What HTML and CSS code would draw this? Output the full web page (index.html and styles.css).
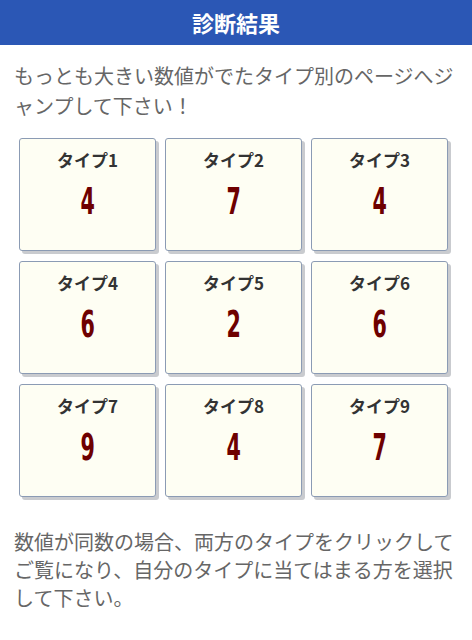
FILE: index.html
```html
<!DOCTYPE html>
<html lang="ja">
<head>
<meta charset="UTF-8">
<meta name="viewport" content="width=device-width, initial-scale=1.0">
<title>診断結果</title>
<link rel="stylesheet" href="styles.css">
</head>
<body>
    <div class="header">診断結果</div>

    <p class="note">もっとも大きい数値がでたタイプ別のページへジャンプして下さい！</p>

    <!-- タイプ別の結果 -->
    <div class="result-grid">
        <a class="type-box" href="#type1"><span class="type-name">タイプ1</span><span class="type-num">4</span></a>
        <a class="type-box" href="#type2"><span class="type-name">タイプ2</span><span class="type-num">7</span></a>
        <a class="type-box" href="#type3"><span class="type-name">タイプ3</span><span class="type-num">4</span></a>
        <a class="type-box" href="#type4"><span class="type-name">タイプ4</span><span class="type-num">6</span></a>
        <a class="type-box" href="#type5"><span class="type-name">タイプ5</span><span class="type-num">2</span></a>
        <a class="type-box" href="#type6"><span class="type-name">タイプ6</span><span class="type-num">6</span></a>
        <a class="type-box" href="#type7"><span class="type-name">タイプ7</span><span class="type-num">9</span></a>
        <a class="type-box" href="#type8"><span class="type-name">タイプ8</span><span class="type-num">4</span></a>
        <a class="type-box" href="#type9"><span class="type-name">タイプ9</span><span class="type-num">7</span></a>
    </div>

    <p class="note note-bottom">数値が同数の場合、両方のタイプをクリックしてご覧になり、自分のタイプに当てはまる方を選択して下さい。</p>
</body>
</html>
```

FILE: styles.css
```css
body{
    margin:0;
    background:#fff;
    font-family:"Noto Sans CJK JP", "Noto Sans", sans-serif;
}

.header{
    height:45px;
    line-height:45px;
    background:#2b57b5;
    color:#fff;
    font-size:22px;
    font-weight:bold;
    text-align:center;
}

.note{
    margin:16px 14px 0;
    color:#666;
    font-size:20px;
    line-height:30px;
}

.result-grid{
    display:grid;
    grid-template-columns:repeat(3, 137px);
    gap:10px 9px;
    margin:17px 0 0 19px;
}

.type-box{
    height:113px;
    box-sizing:border-box;
    border:1px solid #8b9bb4;
    border-radius:3px;
    background:#fefef3;
    box-shadow:3px 3px 0 #c9cbcf;
    display:flex;
    flex-direction:column;
    align-items:center;
    text-decoration:none;
}
.type-name{
    margin-top:10px;
    color:#333;
    font-size:17px;
    font-weight:bold;
    line-height:22px;
}
.type-num{
    display:inline-block;
    margin-top:9px;
    color:#6e0000;
    font-family:"DejaVu Sans Condensed", "DejaVu Sans", sans-serif;
    font-size:37px;
    font-weight:bold;
    line-height:44px;
    transform:scaleX(0.62);
}

/* 下の注意書きは行間が少し詰まっている */
.note-bottom{
    margin-top:31px;
    line-height:28px;
}
```
